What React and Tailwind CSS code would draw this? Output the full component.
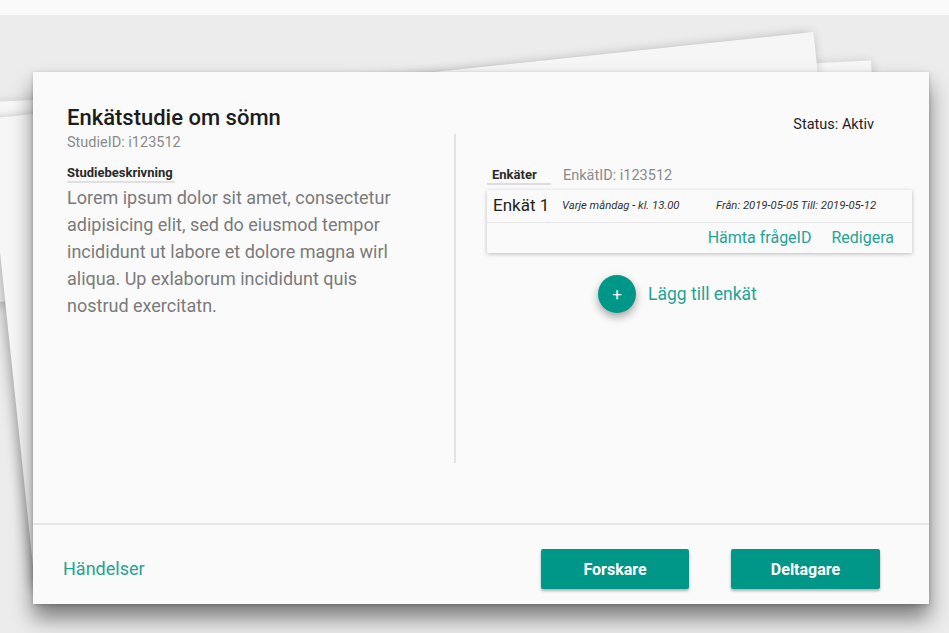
export default function App() {
  return (
    <div className="relative h-[633px] w-[949px] overflow-hidden bg-[#ececec]" style={{ fontFamily: "Roboto, 'Noto Sans', sans-serif" }}>
      <div className="h-[15px] bg-[#fafafa]" />

      {/* stacked sheets behind the card */}
      <div className="absolute left-[-30px] top-[103px] h-[200px] w-[902px] origin-top-left rotate-[-2.7deg] bg-[#f7f7f7] shadow-[0_2px_12px_rgba(0,0,0,0.2)]" />
      <div className="absolute left-[-14px] top-[119px] h-[470px] w-[832px] origin-top-left -rotate-6 bg-[#f6f6f6] shadow-[-3px_2px_12px_rgba(0,0,0,0.3)]" />

      <div className="relative ml-[33px] mt-[57px] flex h-[532px] w-[896px] flex-col bg-[#fafafa] shadow-[0_14px_20px_0_rgba(0,0,0,0.48),0_1px_4px_rgba(0,0,0,0.2)]">
        <div className="flex h-[451px] pl-[34px] pt-[32px]">
          {/* left column */}
          <div className="w-[387px] shrink-0">
            <h1 className="text-[22px] font-medium leading-[28px] text-[#1c1c1c]">Enkätstudie om sömn</h1>
            <p className="mt-[2px] text-[14.5px] leading-[18px] text-[#8a8a8a]">StudieID: i123512</p>
            <div className="mt-[13px] inline-block border-b-2 border-[#e0e0e0] pr-[2px] text-[13px] font-bold leading-[16px] text-[#2a2a2a]">Studiebeskrivning</div>
            <p className="mt-[0px] w-[345px] text-[18px] leading-[27px] text-[#7a7a7a]">
              Lorem ipsum dolor sit amet, consectetur adipisicing elit, sed do eiusmod tempor incididunt ut labore et dolore magna wirl aliqua. Up exlaborum incididunt quis nostrud exercitatn.
            </p>
          </div>

          <div className="mt-[30px] h-[329px] w-[2px] shrink-0 bg-[#e4e4e4]" />

          {/* right column */}
          <div className="flex-1 pl-[31px] pr-[18px]">
            <div className="mt-[11px] flex justify-end pr-[38px]">
              <span className="text-[14.5px] leading-[20px] text-[#1f1f1f]">Status: Aktiv</span>
            </div>
            <div className="mt-[32px] flex items-center">
              <div className="w-[64px] border-b-2 border-[#dcdcdc] pl-[5px] text-[13px] font-bold leading-[16px] text-[#2a2a2a]">Enkäter</div>
              <span className="ml-[12px] text-[14.5px] leading-[16px] text-[#8a8a8a]">EnkätID: i123512</span>
            </div>

            <div className="mt-[5px] w-[425px] bg-[#fafafa] shadow-[0_1px_4px_rgba(0,0,0,0.25)]">
              <div className="flex h-[33px] items-center border-b border-[#e6e6e6] pl-[6px]">
                <span className="w-[69px] text-[17px] text-[#222]">Enkät 1</span>
                <span className="w-[154px] text-[11.3px] italic text-[#333]">Varje måndag - kl. 13.00</span>
                <span className="text-[11.3px] italic text-[#333]">Från: 2019-05-05 Till: 2019-05-12</span>
              </div>
              <div className="flex h-[30px] items-center justify-end gap-[20px] pr-[18px] text-[16px] text-[#1fa396]">
                <span>Hämta frågeID</span>
                <span>Redigera</span>
              </div>
            </div>

            <div className="ml-[111px] mt-[22px] flex items-center">
              <div className="flex h-[38px] w-[38px] items-center justify-center rounded-full bg-[#009688] text-[17px] leading-none text-white shadow-[0_4px_8px_rgba(0,0,0,0.35)]">+</div>
              <span className="ml-[12px] text-[17.5px] text-[#1fa396]">Lägg till enkät</span>
            </div>
          </div>
        </div>

        <div className="flex flex-1 items-center border-t-2 border-[#e6e6e6] pl-[30px] pr-[49px] pt-[8px]">
          <span className="text-[18px] text-[#1fa396]">Händelser</span>
          <div className="ml-auto flex gap-[42px]">
            <button className="h-[40px] w-[148px] rounded-[2px] bg-[#009688] pt-[3px] text-[16px] font-bold text-white shadow-[0_2px_3px_rgba(0,0,0,0.3)]">Forskare</button>
            <button className="h-[40px] w-[149px] rounded-[2px] bg-[#009688] pt-[3px] text-[16px] font-bold text-white shadow-[0_2px_3px_rgba(0,0,0,0.3)]">Deltagare</button>
          </div>
        </div>
      </div>
    </div>
  );
}
